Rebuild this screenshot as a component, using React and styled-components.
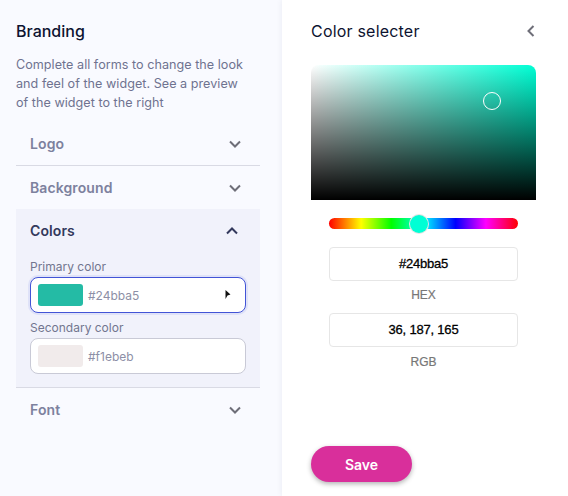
import React from 'react';
import styled, { createGlobalStyle } from 'styled-components';

const Global = createGlobalStyle`
  html, body { margin: 0; padding: 0; background: #fff; }
  * { box-sizing: border-box; }
`;
const Page = styled.div`
  width: 568px; height: 496px; display: flex; overflow: hidden;
  font-family: Inter, "Liberation Sans", sans-serif;
`;
const Sidebar = styled.aside`
  width: 282px; flex: none; background: #f9faff; padding: 21px 22px 0 16px;
`;
const Heading = styled.h2`
  margin: 0; font-size: 16px; line-height: 20px; font-weight: 500; color: #0d1330;
`;
const Description = styled.p`
  margin: 14px 0 0; font-size: 12.6px; line-height: 19px; color: #6f7390;
  width: 230px; height: 57px; letter-spacing: .03px;
`;
const Accordion = styled.div`
  margin-top: 10px; display: flex; flex-direction: column;
`;
const Section = styled.section`
  border-bottom: 1px solid ${p => (p.$noLine ? 'transparent' : p.$soft ? '#f1f2fb' : '#d9dae4')};
  background: ${p => (p.$open ? '#f1f2fb' : 'transparent')};
`;
const SectionHead = styled.div`
  height: ${p => p.$h}px; display: flex; align-items: center; justify-content: space-between;
  padding: 0 ${p => (p.$open ? 21 : 18)}px ${p => (p.$open ? 1 : 0)}px 14px;
  font-size: 14px; font-weight: 600; letter-spacing: .1px;
  color: ${p => (p.$open ? '#33395c' : '#7d819e')};
`;
const Body = styled.div`
  padding: 7px 14px 13px; display: flex; flex-direction: column;
`;
const FieldLabel = styled.label`
  font-size: 12px; line-height: 16px; color: #72768f; margin-bottom: 2px;
`;
const ColorField = styled.div`
  height: 36px; background: #fff; border-radius: 8px; display: flex; align-items: center;
  padding: 0 8px 0 7px; margin-bottom: ${p => (p.$last ? 0 : 7)}px;
  border: 1px solid ${p => (p.$focus ? '#4254d6' : '#c9cad6')};
  box-shadow: ${p => (p.$focus ? '0 0 0 2px #dfe2f8' : 'none')};
  font-size: 12px; color: #8d8fa6;
  position: relative;
`;
const Swatch = styled.span`
  width: 45px; height: 22px; border-radius: 3px; margin-right: 5px; background: ${p => p.$c};
`;
const Cursor = styled.svg`
  position: absolute; left: 194px; top: 12px;
`;
const Main = styled.main`
  flex: 1; background: #fff; padding: 21px 30px 0 29px; display: flex; flex-direction: column;
  position: relative; box-shadow: 0 0 6px rgba(40, 50, 90, .08);
`;
const TitleRow = styled.div`
  display: flex; align-items: center; justify-content: space-between;
`;
const Title = styled.h2`
  margin: 0; font-size: 16px; line-height: 20px; font-weight: 400; color: #0d1330; letter-spacing: .2px;
`;
const Picker = styled.div`
  margin-top: 24px; width: 225px; height: 135px; position: relative; border-radius: 8px 8px 0 0;
  background:
    linear-gradient(to bottom, transparent, #000),
    linear-gradient(to right, #fff, #00ffd5);
`;
const PickerDot = styled.span`
  position: absolute; left: 172px; top: 27px; width: 18px; height: 18px; border-radius: 50%;
  border: 1px solid #fff;
`;
const Controls = styled.div`
  width: 189px; margin: 18px 0 0 18px; display: flex; flex-direction: column; align-items: stretch;
`;
const Hue = styled.div`
  height: 11px; border-radius: 6px; position: relative;
  background: linear-gradient(to right, #f00 0%, #ff0 17%, #0f0 33%, #0ff 50%, #00f 67%, #f0f 83%, #f00 100%);
`;
const HueThumb = styled.span`
  position: absolute; left: 81px; top: -3.5px; width: 18px; height: 18px; border-radius: 50%;
  background: #00ffd5; box-shadow: 0 0 0 1px #e4e4e4;
`;
const ValueBox = styled.div`
  height: 34px; margin-top: ${p => p.$mt}px; border: 1px solid #e6e6e6; border-radius: 4px;
  display: flex; align-items: center; justify-content: center; padding-bottom: 2px;
  font-family: "Liberation Sans", Arial, sans-serif; font-size: 13px; font-weight: 400; color: #000;
  letter-spacing: -.2px; -webkit-text-stroke: .3px #000;
`;
const ValueLabel = styled.div`
  margin-top: ${p => p.$mt}px; text-align: center; font-family: "Liberation Sans", Arial, sans-serif;
  font-size: 12px; line-height: 14px; color: #777;
  -webkit-text-stroke: .2px #777;
`;
const Save = styled.button`
  margin-top: 77px; width: 101px; height: 36px; border: 0; border-radius: 18px; background: #d92f9b;
  color: #fff; font: 600 14px Inter, sans-serif; box-shadow: 0 2px 5px rgba(0, 0, 0, .3);
`;

const Chevron = ({ dir = 'down', color = '#6e6e78' }) => {
  const d = { down: 'M2 4.5 L7 9.5 L12 4.5', up: 'M2 9.5 L7 4.5 L12 9.5', left: 'M9.5 2 L4.5 7 L9.5 12' }[dir];
  return (
    <svg width="14" height="14" viewBox="0 0 14 14" fill="none">
      <path d={d} stroke={color} strokeWidth="2" />
    </svg>
  );
};

export default function App() {
  return (
    <Page>
      <Global />
      <Sidebar>
        <Heading>Branding</Heading>
        <Description>Complete all forms to change the look and feel of the widget. See a preview of the widget to the right</Description>
        <Accordion>
          <Section>
            <SectionHead $h={43}>Logo<Chevron /></SectionHead>
          </Section>
          <Section $soft>
            <SectionHead $h={43}>Background<Chevron /></SectionHead>
          </Section>
          <Section $open>
            <SectionHead $open $h={42}>Colors<Chevron dir="up" color="#33395c" /></SectionHead>
            <Body>
              <FieldLabel>Primary color</FieldLabel>
              <ColorField $focus>
                <Swatch $c="#24bba5" />#24bba5
                <Cursor width="6" height="9" viewBox="0 0 6 9"><path d="M0.5 0 L5.5 4.5 L2.5 5.5 L0.5 9 Z" fill="#111" /></Cursor>
              </ColorField>
              <FieldLabel>Secondary color</FieldLabel>
              <ColorField $last>
                <Swatch $c="#f1ebeb" />#f1ebeb
              </ColorField>
            </Body>
          </Section>
          <Section $noLine>
            <SectionHead $h={43}>Font<Chevron /></SectionHead>
          </Section>
        </Accordion>
      </Sidebar>
      <Main>
        <TitleRow>
          <Title>Color selecter</Title>
          <Chevron dir="left" />
        </TitleRow>
        <Picker><PickerDot /></Picker>
        <Controls>
          <Hue><HueThumb /></Hue>
          <ValueBox $mt={18}>#24bba5</ValueBox>
          <ValueLabel $mt={7}>HEX</ValueLabel>
          <ValueBox $mt={11}>36, 187, 165</ValueBox>
          <ValueLabel $mt={8}>RGB</ValueLabel>
        </Controls>
        <Save>Save</Save>
      </Main>
    </Page>
  );
}
